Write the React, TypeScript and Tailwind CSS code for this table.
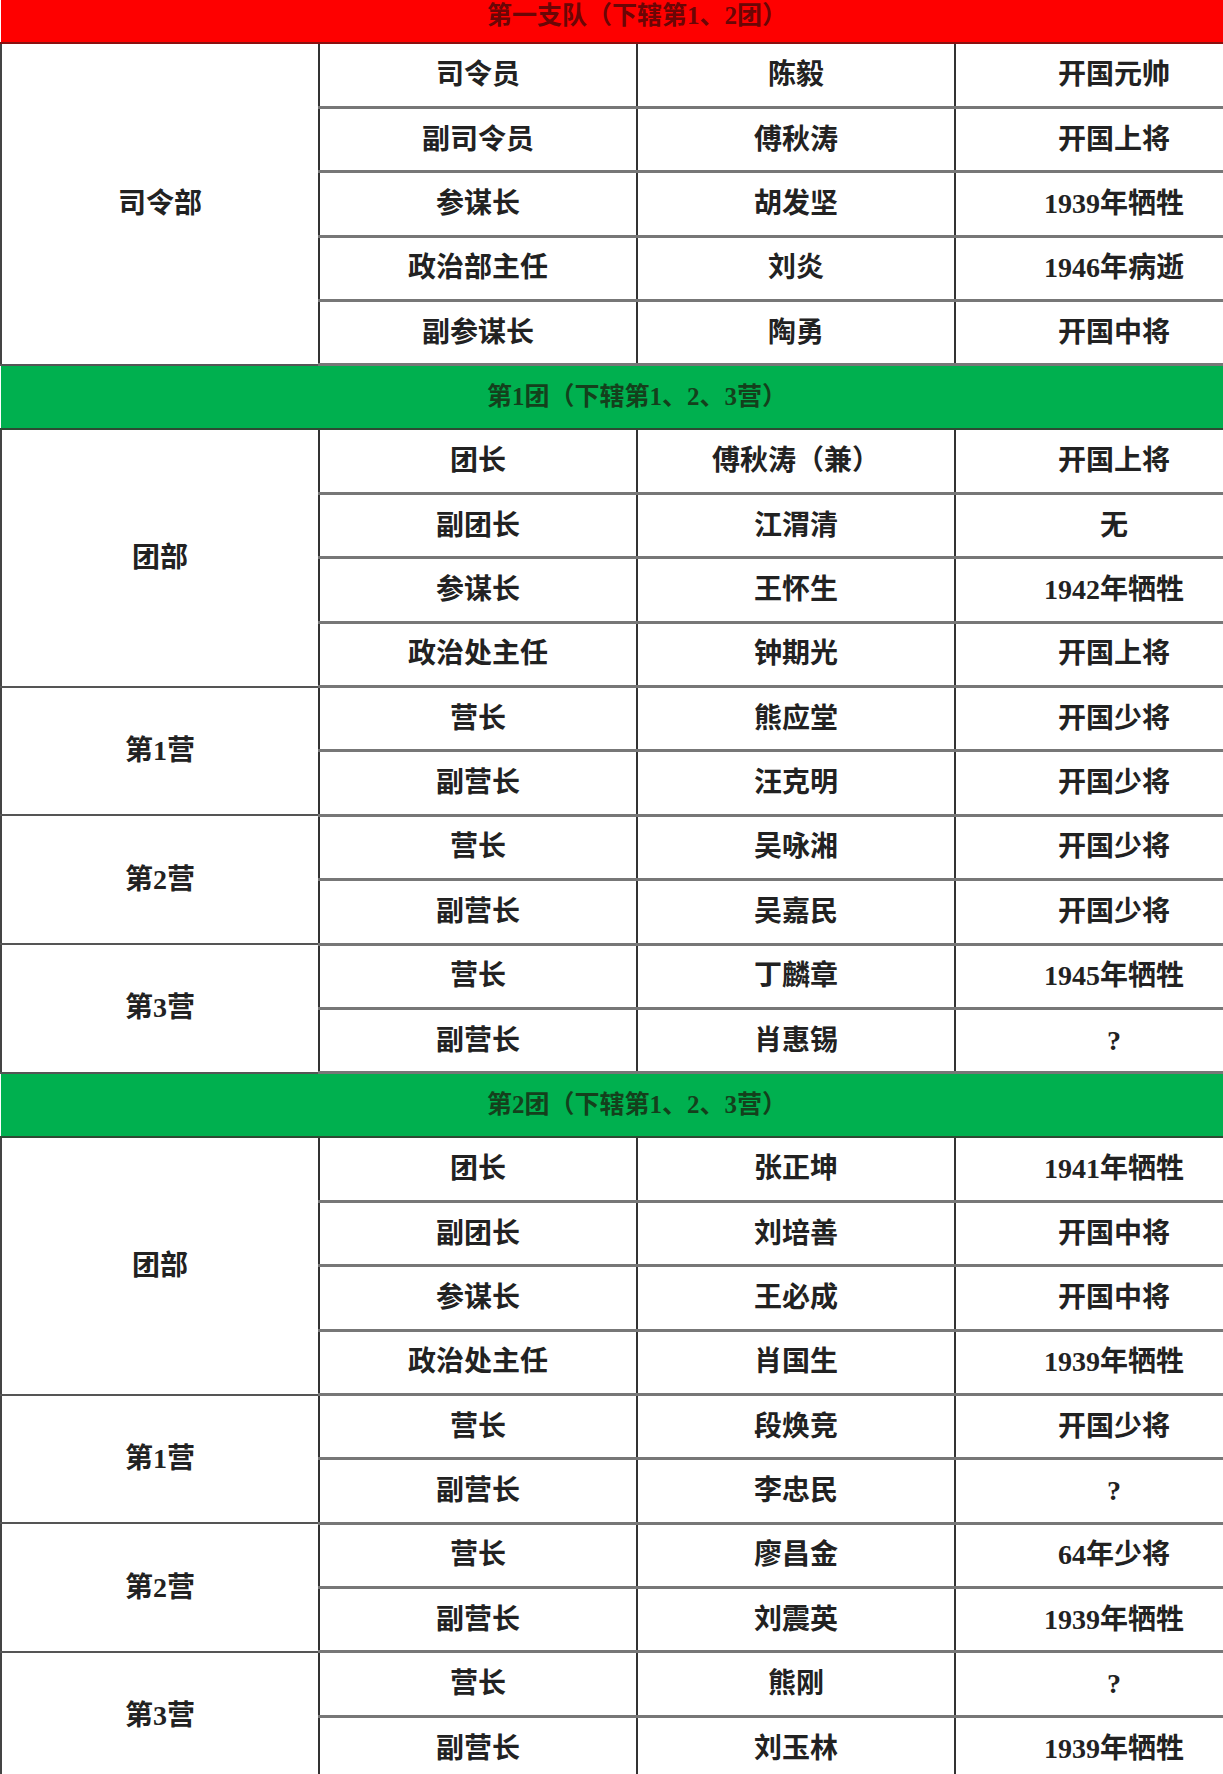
import React from "react"

type Group = { name: string; rows: [string, string, string][] }
type Section = { title: string; color: "red" | "green"; groups: Group[] }

const sections: Section[] = [
  {
    title: "第一支队（下辖第1、2团）",
    color: "red",
    groups: [
      {
        name: "司令部",
        rows: [
          ["司令员", "陈毅", "开国元帅"],
          ["副司令员", "傅秋涛", "开国上将"],
          ["参谋长", "胡发坚", "1939年牺牲"],
          ["政治部主任", "刘炎", "1946年病逝"],
          ["副参谋长", "陶勇", "开国中将"],
        ],
      },
    ],
  },
  {
    title: "第1团（下辖第1、2、3营）",
    color: "green",
    groups: [
      {
        name: "团部",
        rows: [
          ["团长", "傅秋涛（兼）", "开国上将"],
          ["副团长", "江渭清", "无"],
          ["参谋长", "王怀生", "1942年牺牲"],
          ["政治处主任", "钟期光", "开国上将"],
        ],
      },
      { name: "第1营", rows: [["营长", "熊应堂", "开国少将"], ["副营长", "汪克明", "开国少将"]] },
      { name: "第2营", rows: [["营长", "吴咏湘", "开国少将"], ["副营长", "吴嘉民", "开国少将"]] },
      { name: "第3营", rows: [["营长", "丁麟章", "1945年牺牲"], ["副营长", "肖惠锡", "?"]] },
    ],
  },
  {
    title: "第2团（下辖第1、2、3营）",
    color: "green",
    groups: [
      {
        name: "团部",
        rows: [
          ["团长", "张正坤", "1941年牺牲"],
          ["副团长", "刘培善", "开国中将"],
          ["参谋长", "王必成", "开国中将"],
          ["政治处主任", "肖国生", "1939年牺牲"],
        ],
      },
      { name: "第1营", rows: [["营长", "段焕竞", "开国少将"], ["副营长", "李忠民", "?"]] },
      { name: "第2营", rows: [["营长", "廖昌金", "64年少将"], ["副营长", "刘震英", "1939年牺牲"]] },
      { name: "第3营", rows: [["营长", "熊刚", "?"], ["副营长", "刘玉林", "1939年牺牲"]] },
    ],
  },
]

const font = { fontFamily: '"Liberation Serif", "Noto Sans CJK SC", serif' }

export default function App() {
  return (
    <div className="w-[1223px] h-[1774px] overflow-hidden bg-white" style={font}>
      <table className="w-[1272px] table-fixed border-collapse text-[28px] font-semibold text-[#222]">
        <colgroup>
          <col className="w-[318px]" />
          <col className="w-[318px]" />
          <col className="w-[318px]" />
          <col className="w-[318px]" />
        </colgroup>
        <tbody>
          {sections.map((s, si) => (
            <React.Fragment key={si}>
              <tr className={si === 0 ? "h-[43px]" : "h-[64.36px]"}>
                <td
                  colSpan={4}
                  className={
                    s.color === "red"
                      ? "bg-[#fe0000] border-b-2 border-[#8a1010] text-center text-[25px] font-bold text-[#6a0606] pb-[12px] leading-none"
                      : "bg-[#00b04f] border-y-2 border-[#2d4a33] text-center text-[25px] font-bold text-[#14401c]"
                  }
                >
                  {s.title}
                </td>
              </tr>
              {s.groups.map((g, gi) =>
                g.rows.map((r, ri) => (
                  <tr key={`${gi}-${ri}`} className="h-[64.36px]">
                    {ri === 0 && (
                      <td
                        rowSpan={g.rows.length}
                        className="border-l-2 border-r-2 border-b-2 border-l-[#444] border-r-[#333] border-b-[#555] text-center"
                      >
                        {g.name}
                      </td>
                    )}
                    {r.map((c, ci) => (
                      <td
                        key={ci}
                        className="border-r-2 border-b-[3px] border-r-[#333] border-b-[#777] text-center"
                      >
                        {c}
                      </td>
                    ))}
                  </tr>
                ))
              )}
            </React.Fragment>
          ))}
        </tbody>
      </table>
    </div>
  )
}
